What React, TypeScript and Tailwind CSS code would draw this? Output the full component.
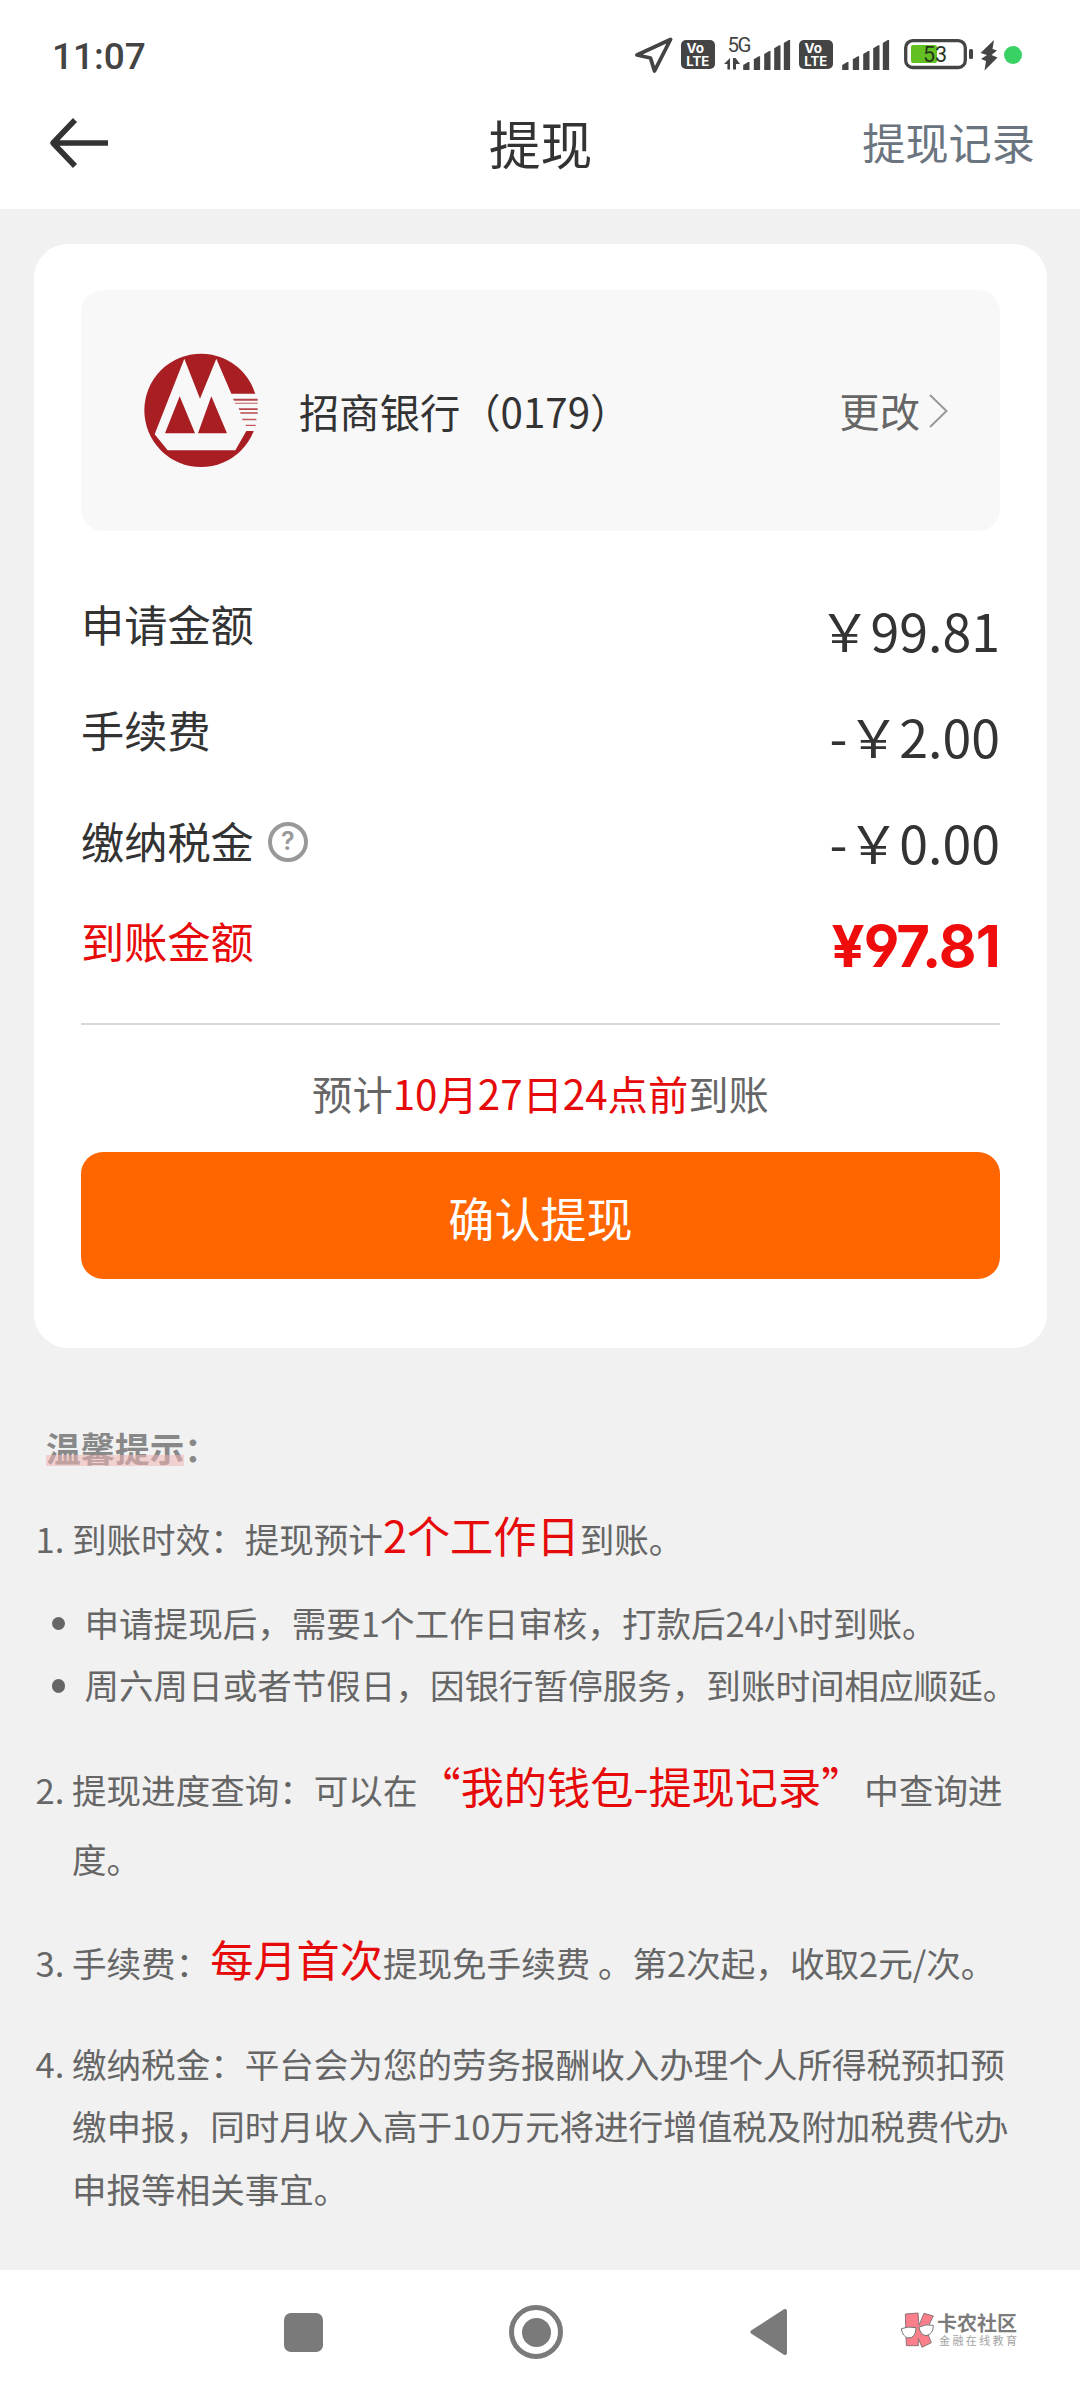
import type { ReactNode } from "react";

const BARS = [
    { x: 0.2, y: 25 },
    { x: 10.8, y: 19.3 },
    { x: 21.2, y: 14 },
    { x: 31.2, y: 8.3 },
    { x: 40.8, y: 3 },
];

function SignalBars() {
    return (
        <svg width="48" height="36" viewBox="0 0 48 36" fill="#444">
            {BARS.map((bar) => (
                <path
                    key={bar.x}
                    d={`M${bar.x} 33V${bar.y + 3}L${bar.x + 5} ${bar.y}H${bar.x + 6.3}V33Z`}
                />
            ))}
        </svg>
    );
}

function VolteIcon() {
    return (
        <svg width="34" height="36" viewBox="0 0 34 36">
            <rect y="3" width="34" height="29" rx="5" fill="#444" />
            <g fill="#fff" fontFamily="Inter, sans-serif" fontWeight="700" fontSize="13">
                <text x="5.5" y="16.3" textLength="17.5" lengthAdjust="spacingAndGlyphs">
                    Vo
                </text>
                <text x="5.3" y="28.8" textLength="23" lengthAdjust="spacingAndGlyphs">
                    LTE
                </text>
            </g>
        </svg>
    );
}

function StatusBar() {
    return (
        <div className="flex h-[76px] items-center pt-[34px] pl-[52px] font-['Roboto',sans-serif]">
            <span className="mt-[2px] flex-1 text-[37px] leading-none font-medium text-[#444]">
                11:07
            </span>

            <svg width="38" height="36" viewBox="0 0 38 36">
                <path
                    d="M35.5 2.5L2 18L15.5 21L19.5 34Z"
                    fill="none"
                    stroke="#444"
                    strokeWidth="3.8"
                    strokeLinejoin="round"
                />
            </svg>
            <div className="ml-2">
                <VolteIcon />
            </div>
            <svg className="ml-[9px] overflow-visible" width="29" height="36" viewBox="0 0 29 36">
                <text x="3.5" y="15.3" fontSize="20.5" fill="#444" fontFamily="Roboto, sans-serif" textLength="24">
                    5G
                </text>
                <path d="M0 27L6 21V32.5H3.4V27ZM9 21H11.6L16 27H12V32.5H9Z" fill="#444" />
            </svg>
            <div className="-ml-[9.5px]">
                <SignalBars />
            </div>
            <div className="ml-2">
                <VolteIcon />
            </div>
            <div className="ml-[9px]">
                <SignalBars />
            </div>

            <svg className="ml-[14px]" width="70" height="36" viewBox="0 0 70 36">
                <rect x="1.7" y="3.7" width="59.6" height="26.8" rx="7" fill="none" stroke="#444" strokeWidth="3.3" />
                <rect x="7" y="8" width="26" height="18" rx="2" fill="#62c022" />
                <rect x="65" y="12" width="4" height="10" rx="1.5" fill="#444" />
                <text x="19" y="25" fontSize="21.5" fill="#26351c" fontFamily="Roboto, sans-serif">
                    53
                </text>
            </svg>
            <svg className="ml-[5px]" width="20" height="36" viewBox="0 0 20 36">
                <path d="M15 3L1.5 16L8 18L2 22L7 24L5.5 33.5L18.5 20.5L12.5 18L18 13.5L13.5 12Z" fill="#444" />
            </svg>
            <div className="mr-[58px] ml-[5px] size-[18px] rounded-full bg-[#37d164]" />
        </div>
    );
}

function BankLogo() {
    return (
        <svg width="114" height="115" viewBox="41 38 342 345">
            <circle cx="212" cy="210" r="170" fill="#a81e22" />
            <path
                d="M73 282L162 55L209 175L258 55L303 160H384V272H348L315 330H112Z"
                fill="#f8f8f8"
            />
            <path d="M148 168L104 279H194ZM243 168L203 279H290Z" fill="#a81e22" />
            <path
                d="M308 175H382V181H311ZM325 204H382V209H327ZM329 216H382V220H331Z"
                fill="#b8474b"
            />
            <path
                d="M313 187H382V190H315ZM335 235H378V240H337ZM345 253H376V257H347Z"
                fill="#c0595c"
            />
        </svg>
    );
}

function AmountRow({ label, children }: { label: ReactNode; children: ReactNode }) {
    return (
        <div className="flex h-[106px] items-center justify-between">
            {label}
            <span className="text-[51.84px] leading-none">{children}</span>
        </div>
    );
}

function Hot({ children }: { children: ReactNode }) {
    return <span className="text-[43.2px] leading-none text-[#e60a0a]">{children}</span>;
}

function Tip({ index, className, children }: { index: number; className: string; children: ReactNode }) {
    return (
        <div className={`flex ${className}`}>
            <span className="w-[36.5px] shrink-0">{index}.</span>
            <p className="w-[942px]">{children}</p>
        </div>
    );
}

function BulletTip({ children }: { children: ReactNode }) {
    return (
        <li className="flex items-center whitespace-nowrap">
            <span className="mt-[3px] mr-[19.5px] ml-[16px] size-[13.5px] rounded-full bg-[#666]" />
            {children}
        </li>
    );
}

function NavBar() {
    return (
        <nav className="flex h-[130px] items-center bg-white pb-[6px]">
            <div className="ml-[284px] size-[39px] rounded-[7px] bg-[#7a7a7a]" />
            <div className="ml-[186px] flex size-[54px] items-center justify-center rounded-full border-[5px] border-[#7a7a7a]">
                <div className="size-[29px] rounded-full bg-[#7a7a7a]" />
            </div>
            <svg className="ml-[187px]" width="38" height="48" viewBox="0 0 38 48">
                <path
                    d="M2.5 24L35 3V45Z"
                    fill="#7a7a7a"
                    stroke="#7a7a7a"
                    strokeWidth="4"
                    strokeLinejoin="round"
                />
            </svg>

            <div className="ml-[112px] flex items-center">
                <svg className="-mt-[3px]" width="35" height="37" viewBox="0 0 105 111">
                    <g fill="#fb7f8b" stroke="#8a7678" strokeWidth="3">
                        <path d="M16 6L54 3L57 40L72 4L100 12L79 55L94 92L66 106L55 79V101H19Z" />
                    </g>
                    <g fill="#fff" stroke="#777" strokeWidth="3">
                        <path d="M4 50Q24 42 48 47Q48 78 24 78Q8 74 4 50Z" />
                        <path d="M57 45Q80 35 100 40Q100 67 78 71Q60 68 57 45Z" />
                    </g>
                </svg>
                <div className="ml-[2px] pb-[6px] whitespace-nowrap">
                    <div className="text-[20px] leading-[21px] font-bold text-[#7c7c7c]">卡农社区</div>
                    <div className="pl-[2px] text-[11px] leading-[14px] tracking-[2.4px] text-[#a3a3a3]">
                        金融在线教育
                    </div>
                </div>
            </div>
        </nav>
    );
}

export default function App() {
    return (
        <main
            lang="zh-CN"
            className="flex h-[2400px] w-[1080px] flex-col overflow-hidden bg-[#f1f1f1] font-['Noto_Sans_CJK_SC',sans-serif] text-[#333]"
        >
            <header className="h-[209px] shrink-0 bg-white">
                <StatusBar />
                <div className="grid h-[133px] grid-cols-3 items-center pr-[45px] pl-[49px]">
                    <svg width="60" height="50" viewBox="0 0 60 50">
                        <path
                            d="M26 2L4 25L26 48M4 25H59"
                            fill="none"
                            stroke="#333"
                            strokeWidth="5.6"
                            strokeLinejoin="round"
                        />
                    </svg>
                    <h1 className="pr-[3px] text-center text-[51.84px] leading-none">提现</h1>
                    <span className="pb-[2px] text-right text-[43.2px] leading-none text-[#6b757f]">
                        提现记录
                    </span>
                </div>
            </header>

            <section className="mx-[34px] mt-[35px] h-[1104px] w-[1013px] shrink-0 rounded-[34px] bg-white px-[47px] pt-[46px]">
                <div className="flex h-[241px] items-center rounded-[22px] bg-[#f8f8f8] pl-[63px] text-[40.32px] leading-none">
                    <BankLogo />
                    <span className="ml-[41px] flex-1 pt-[2px] whitespace-nowrap">招商银行（0179）</span>
                    <span className="text-[#666]">更改</span>
                    <svg className="mr-[51px] ml-[9px]" width="20" height="36" viewBox="0 0 20 36">
                        <path d="M1 2L17.5 18L1 34" fill="none" stroke="#999" strokeWidth="2" />
                    </svg>
                </div>

                <div className="mt-[46px] text-[43.2px] leading-none">
                    <AmountRow label={<span className="pb-3">申请金额</span>}>￥99.81</AmountRow>
                    <AmountRow label={<span className="pb-3">手续费</span>}>-￥2.00</AmountRow>
                    <AmountRow
                        label={
                            <span className="flex items-center pb-[2px]">
                                缴纳税金
                                <span className="mt-[2px] ml-[14px] flex size-[40px] items-center justify-center rounded-full border-[4px] border-[#999] font-['Inter',sans-serif] text-[25px] font-semibold text-[#999]">
                                    ?
                                </span>
                            </span>
                        }
                    >
                        -￥0.00
                    </AmountRow>
                    <div className="flex h-[101px] items-center justify-between text-[#e60a0a]">
                        <span className="pb-[10px]">到账金额</span>
                        <span className="font-['Inter',sans-serif] text-[58px] font-bold tracking-[-0.8px] text-[#ee0c0c] [font-feature-settings:'cv04']">
                            ¥97.81
                        </span>
                    </div>
                </div>

                <div className="mt-[27px] h-[2px] bg-[#d8d8d8]" />

                <p className="mt-[38px] text-center text-[40.32px] leading-[60px] text-[#666]">
                    预计<span className="text-[#e60a0a]">10月27日24点前</span>到账
                </p>
                <button
                    type="button"
                    className="mt-[29px] flex h-[127px] w-full items-center justify-center rounded-[22px] bg-[#ff6600] pt-1 text-[46.08px] leading-none text-white"
                >
                    确认提现
                </button>
            </section>

            <section className="mt-[68px] flex-1 pl-[35.5px] text-[34.56px] leading-[62.4px] text-[#666]">
                <h2 className="pl-[10.5px] font-bold text-[#888]">
                    <span className="relative inline-block">
                        温馨提示
                        <span className="absolute bottom-[12px] left-0 h-[11px] w-full bg-[#f0b4b4]/55" />
                    </span>
                    ：
                </h2>

                <Tip index={1} className="mt-[28.6px]">
                    到账时效：提现预计<Hot>2个工作日</Hot>到账。
                </Tip>
                <ul className="mt-[21.6px]">
                    <BulletTip>申请提现后，需要1个工作日审核，打款后24小时到账。</BulletTip>
                    <BulletTip>周六周日或者节假日，因银行暂停服务，到账时间相应顺延。</BulletTip>
                </ul>
                <Tip index={2} className="mt-[39.2px] leading-[68.8px]">
                    提现进度查询：可以在<Hot>“我的钱包-提现记录”</Hot>中查询进度。
                </Tip>
                <Tip index={3} className="mt-[38.7px]">
                    手续费：<Hot>每月首次</Hot>提现免手续费 。第2次起，收取2元/次。
                </Tip>
                <Tip index={4} className="mt-[38.1px]">
                    缴纳税金：平台会为您的劳务报酬收入办理个人所得税预扣预缴申报，同时月收入高于10万元将进行增值税及附加税费代办申报等相关事宜。
                </Tip>
            </section>

            <NavBar />
        </main>
    );
}
